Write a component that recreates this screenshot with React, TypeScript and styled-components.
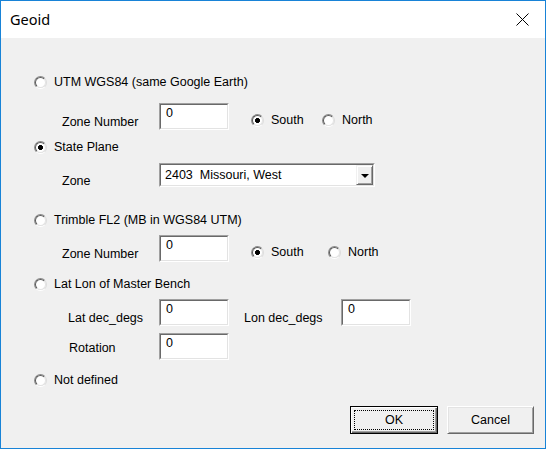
import React from "react";
import styled, { createGlobalStyle } from "styled-components";

const Global = createGlobalStyle`
  html, body { margin: 0; padding: 0; background: #ffffff; }
  * { box-sizing: border-box; }
`;

const Window = styled.div`
  width: 546px;
  height: 449px;
  border: 1px solid #1883d7;
  background: #f0f0f0;
  display: flex;
  flex-direction: column;
  font-family: "Liberation Sans", Arial, sans-serif;
  font-size: 12.5px;
  color: #000;
  overflow: hidden;
`;

const TitleBar = styled.div`
  height: 37px;
  background: #ffffff;
  display: flex;
  align-items: center;
  justify-content: space-between;
  padding: 0 0 0 9px;
  flex-shrink: 0;
`;

const Title = styled.div`
  font-family: "Noto Sans", "Open Sans", sans-serif;
  font-size: 14.5px;
  color: #000;
  margin-top: -1px;
`;

const CloseBox = styled.div`
  width: 46px;
  height: 36px;
  display: flex;
  align-items: center;
  justify-content: center;
`;

const Content = styled.div`
  flex: 1;
  display: flex;
  flex-direction: column;
  padding: 34px 0 0 33px;
`;

const RadioRow = styled.div<{ $mt?: number }>`
  height: 20px;
  display: flex;
  align-items: center;
  gap: 8px;
  margin-top: ${(p) => p.$mt ?? 0}px;
  line-height: 15px;
  white-space: nowrap;
`;

const RadioCircle = styled.span<{ $checked?: boolean }>`
  width: 13px;
  height: 13px;
  border-radius: 50%;
  border: 1px solid;
  border-color: #8c8c8c #dcdcdc #ffffff #8c8c8c;
  display: flex;
  align-items: center;
  justify-content: center;
  flex-shrink: 0;
  margin-right: -1px;
  &::before {
    content: "";
    width: 11px;
    height: 11px;
    border-radius: 50%;
    border: 1px solid;
    border-color: #5a5a5a #e3e3e3 #e3e3e3 #5a5a5a;
    box-sizing: border-box;
    display: block;
    background: ${(p) =>
      p.$checked
        ? "radial-gradient(circle at center, #000 0, #000 2.2px, #ffffff 2.8px)"
        : "#ffffff"};
  }
`;

const FieldRow = styled.div<{ $mt: number; $h: number }>`
  display: flex;
  align-items: flex-end;
  height: ${(p) => p.$h}px;
  margin-top: ${(p) => p.$mt}px;
  white-space: nowrap;
`;

const Label = styled.span<{ $w: number; $pl: number; $pb?: number }>`
  width: ${(p) => p.$w}px;
  padding-left: ${(p) => p.$pl}px;
  line-height: 15px;
  margin-bottom: ${(p) => p.$pb ?? 0}px;
  flex-shrink: 0;
`;

const TextBox = styled.div<{ $mr?: number }>`
  width: 70px;
  height: 27px;
  align-self: flex-start;
  background: #ffffff;
  border: 1px solid;
  border-color: #a0a0a0 #ffffff #ffffff #a0a0a0;
  margin-right: ${(p) => p.$mr ?? 0}px;
  flex-shrink: 0;
`;

const TextInner = styled.div`
  width: 100%;
  height: 100%;
  border: 1px solid;
  border-color: #696969 #e3e3e3 #e3e3e3 #696969;
  padding: 1px 0 0 5px;
  line-height: 15px;
`;

const Option = styled.div<{ $w: number }>`
  width: ${(p) => p.$w}px;
  height: 20px;
  display: flex;
  align-items: center;
  gap: 8px;
  line-height: 15px;
  flex-shrink: 0;
`;

const Combo = styled.div`
  width: 216px;
  height: 24px;
  align-self: flex-start;
  border: 1px solid;
  border-color: #a0a0a0 #ffffff #ffffff #a0a0a0;
  background: #ffffff;
`;

const ComboInner = styled.div`
  height: 100%;
  border: 1px solid;
  border-color: #696969 #e3e3e3 #e3e3e3 #696969;
  display: flex;
  align-items: stretch;
`;

const ComboText = styled.div`
  flex: 1;
  padding: 3px 0 0 4px;
  line-height: 15px;
  white-space: pre;
`;

const ComboButton = styled.div`
  width: 17px;
  background: #f0f0f0;
  border: 1px solid;
  border-color: #f0f0f0 #696969 #696969 #f0f0f0;
  box-shadow: inset 1px 1px 0 #ffffff, inset -1px -1px 0 #a0a0a0;
  display: flex;
  align-items: center;
  justify-content: center;
`;

const Arrow = styled.span`
  width: 0;
  height: 0;
  border-left: 4px solid transparent;
  border-right: 4px solid transparent;
  border-top: 4px solid #000;
  margin-top: 1px;
`;

const ButtonBar = styled.div`
  display: flex;
  justify-content: flex-end;
  gap: 9px;
  padding-right: 11px;
  margin-top: 16px;
`;

const Button = styled.div<{ $default?: boolean; $w: number }>`
  width: ${(p) => p.$w}px;
  height: 28px;
  background: #f0f0f0;
  border: 1px solid;
  border-color: ${(p) =>
    p.$default ? "#000000" : "#ffffff #696969 #696969 #ffffff"};
  box-shadow: ${(p) =>
    p.$default
      ? "inset 1px 1px 0 #ffffff, inset -1px -1px 0 #696969, inset -2px -2px 0 #a0a0a0"
      : "inset 1px 1px 0 #e3e3e3, inset -1px -1px 0 #a0a0a0"};
  display: flex;
  align-items: center;
  justify-content: center;
  line-height: 15px;
  position: relative;
`;

const FocusRect = styled.span`
  position: absolute;
  left: 3px;
  top: 3px;
  right: 3px;
  bottom: 3px;
  border: 1px dotted #000;
`;

const Radio = ({ checked }: { checked?: boolean }) => <RadioCircle $checked={checked} />;

export default function App() {
  return (
    <>
      <Global />
      <Window>
        <TitleBar>
          <Title>Geoid</Title>
          <CloseBox>
            <svg width="13" height="13" viewBox="0 0 13 13">
              <path d="M0.5 0.5 L12.5 12.5 M12.5 0.5 L0.5 12.5" stroke="#000" strokeWidth="1" fill="none" />
            </svg>
          </CloseBox>
        </TitleBar>
        <Content>
          <RadioRow>
            <Radio />
            <span>UTM WGS84 (same Google Earth)</span>
          </RadioRow>
          <FieldRow $mt={11} $h={27}>
            <Label $w={125} $pl={28}>Zone Number</Label>
            <TextBox $mr={22}>
              <TextInner>0</TextInner>
            </TextBox>
            <Option $w={71}>
              <Radio checked />
              <span>South</span>
            </Option>
            <Option $w={60}>
              <Radio />
              <span>North</span>
            </Option>
          </FieldRow>
          <RadioRow $mt={7}>
            <Radio checked />
            <span>State Plane</span>
          </RadioRow>
          <FieldRow $mt={6} $h={24}>
            <Label $w={125} $pl={28} $pb={-2}>Zone</Label>
            <Combo>
              <ComboInner>
                <ComboText>2403  Missouri, West</ComboText>
                <ComboButton>
                  <Arrow />
                </ComboButton>
              </ComboInner>
            </Combo>
          </FieldRow>
          <RadioRow $mt={23}>
            <Radio />
            <span>Trimble FL2 (MB in WGS84 UTM)</span>
          </RadioRow>
          <FieldRow $mt={5} $h={27}>
            <Label $w={125} $pl={28}>Zone Number</Label>
            <TextBox $mr={22}>
              <TextInner>0</TextInner>
            </TextBox>
            <Option $w={77}>
              <Radio checked />
              <span>South</span>
            </Option>
            <Option $w={60}>
              <Radio />
              <span>North</span>
            </Option>
          </FieldRow>
          <RadioRow $mt={12}>
            <Radio />
            <span>Lat Lon of Master Bench</span>
          </RadioRow>
          <FieldRow $mt={5} $h={27}>
            <Label $w={125} $pl={34}>Lat dec_degs</Label>
            <TextBox $mr={15}>
              <TextInner>0</TextInner>
            </TextBox>
            <Label $w={97} $pl={0}>Lon dec_degs</Label>
            <TextBox>
              <TextInner>0</TextInner>
            </TextBox>
          </FieldRow>
          <FieldRow $mt={7} $h={27}>
            <Label $w={125} $pl={35} $pb={4}>Rotation</Label>
            <TextBox>
              <TextInner>0</TextInner>
            </TextBox>
          </FieldRow>
          <RadioRow $mt={10}>
            <Radio />
            <span>Not defined</span>
          </RadioRow>
          <ButtonBar>
            <Button $default $w={88}>
              <FocusRect />
              OK
            </Button>
            <Button $w={87}>Cancel</Button>
          </ButtonBar>
        </Content>
      </Window>
    </>
  );
}
